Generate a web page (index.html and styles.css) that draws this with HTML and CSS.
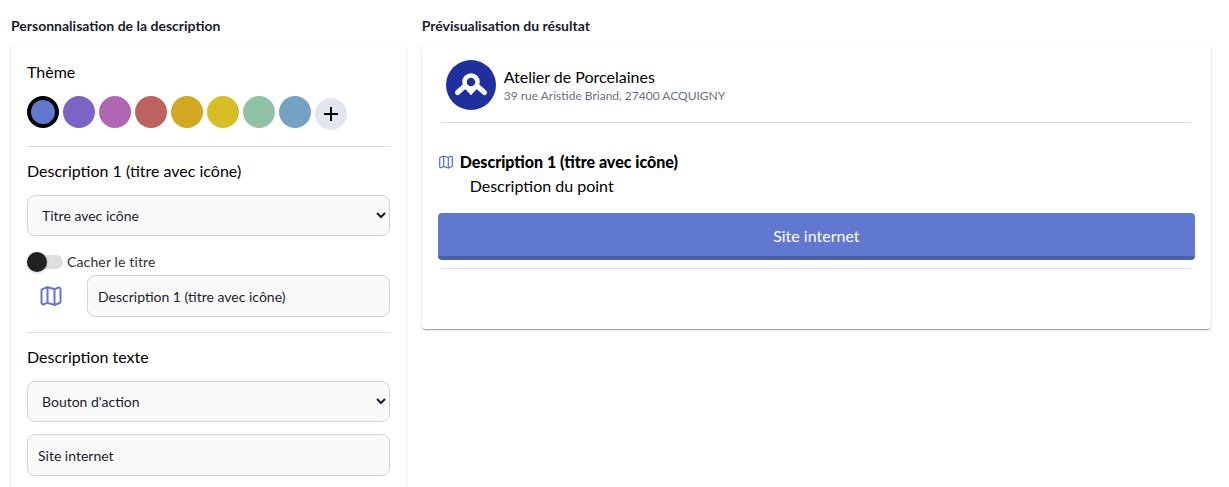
FILE: index.html
```html
<!DOCTYPE html>
<html lang="fr">
<head>
    <meta charset="UTF-8">
    <meta name="viewport" content="width=device-width, initial-scale=1.0">
    <title>Personnalisation de la description</title>
    <link rel="stylesheet" href="styles.css">
</head>
<body>
    <svg width="0" height="0" class="sprite" aria-hidden="true">
        <symbol id="icon-map" viewBox="0 0 24 24">
            <path d="M8.500 3.200v16M15.500 5v16M2.500 6.600v12.200a1.600 1.600 0 0 0 2.200 1.500l3.200-1.300a1.600 1.600 0 0 1 1.100 0l6 1.900a1.600 1.600 0 0 0 1-.1l4.500-1.800a1.600 1.600 0 0 0 1-1.500V5.100a1.600 1.600 0 0 0-2.200-1.500L16 5a1.600 1.600 0 0 1-1.100 0L9 3.300a1.600 1.600 0 0 0-1 0L3.500 5.100a1.600 1.600 0 0 0-1 1.500z"/>
        </symbol>
    </svg>

    <main class="layout">
        <section class="editor">
            <h2 class="heading">Personnalisation de la description</h2>
            <form class="card form">
                <div class="group">
                    <h3 class="label">Thème</h3>
                    <div class="swatches">
                        <button type="button" class="swatch blue selected" aria-label="Bleu"></button>
                        <button type="button" class="swatch violet" aria-label="Violet"></button>
                        <button type="button" class="swatch pink" aria-label="Rose"></button>
                        <button type="button" class="swatch red" aria-label="Rouge"></button>
                        <button type="button" class="swatch ochre" aria-label="Ocre"></button>
                        <button type="button" class="swatch yellow" aria-label="Jaune"></button>
                        <button type="button" class="swatch green" aria-label="Vert"></button>
                        <button type="button" class="swatch sky" aria-label="Ciel"></button>
                        <button type="button" class="swatch add" aria-label="Ajouter une couleur">
                            <svg viewBox="0 0 24 24" width="24" height="24"><path d="M19 13h-6v6h-2v-6H5v-2h6V5h2v6h6z"/></svg>
                        </button>
                    </div>
                </div>

                <div class="group">
                    <label class="label" for="type-1">Description 1 (titre avec icône)</label>
                    <select class="field" id="type-1">
                        <option>Titre avec icône</option>
                        <option>Bouton d'action</option>
                    </select>
                    <label class="toggle">
                        <input type="checkbox" class="switch">
                        Cacher le titre
                    </label>
                    <div class="icon-row">
                        <button type="button" class="icon-button" aria-label="Choisir une icône">
                            <svg class="map"><use href="#icon-map"/></svg>
                        </button>
                        <input type="text" class="field" aria-label="Titre" value="Description 1 (titre avec icône)">
                    </div>
                </div>

                <div class="group">
                    <label class="label" for="type-2">Description texte</label>
                    <select class="field" id="type-2">
                        <option>Bouton d'action</option>
                        <option>Titre avec icône</option>
                    </select>
                    <input type="text" class="field below" aria-label="Texte du bouton" value="Site internet">
                </div>
            </form>
        </section>

        <section class="preview">
            <h2 class="heading">Prévisualisation du résultat</h2>
            <div class="card result">
                <header class="company">
                    <svg class="logo" viewBox="0 0 50 50" aria-hidden="true">
                        <circle cx="25" cy="25" r="25" fill="#1f2f9e"/>
                        <path d="M11.500 32.500l8-7 5.500 6 5.500-6 8 7" fill="none" stroke="#fff" stroke-width="5" stroke-linecap="round"/>
                        <circle cx="25" cy="22" r="6.500" fill="#1f2f9e" stroke="#fff" stroke-width="4.500"/>
                    </svg>
                    <div>
                        <p class="name">Atelier de Porcelaines</p>
                        <p class="address">39 rue Aristide Briand, 27400 ACQUIGNY</p>
                    </div>
                </header>
                <div class="point">
                    <h3 class="point-title"><svg class="map small"><use href="#icon-map"/></svg>Description 1 (titre avec icône)</h3>
                    <p class="point-text">Description du point</p>
                    <button type="button" class="action">Site internet</button>
                </div>
            </div>
        </section>
    </main>
</body>
</html>
```
FILE: styles.css
```css
* {
    box-sizing: border-box;
}

body {
    margin: 0;
    font-family: Lato, sans-serif;
    font-size: 16px;
    line-height: 24px;
    color: #000;
    background-color: #fff;
}

h2, h3, p {
    margin: 0;
    font-size: 16px;
    font-weight: 400;
}

button, input, select {
    font-family: inherit;
    margin: 0;
}

.sprite {
    position: absolute;
}

.layout {
    display: flex;
    gap: 16px;
    height: 100vh;
    padding: 16px 18px 0 11px;
    overflow: hidden;
}

.editor {
    flex: 1;
    min-width: 0;
}

.preview {
    flex: 2;
    min-width: 0;
}

.heading {
    margin-bottom: 8px;
    font-size: 14px;
    line-height: 20px;
    font-weight: 700;
    color: #1a1c2e;
}

.card {
    border-radius: 4px;
    background-color: #fff;
    box-shadow: 0 2px 1px -1px rgba(0, 0, 0, 0.2), 0 1px 1px 0 rgba(0, 0, 0, 0.14), 0 1px 3px 0 rgba(0, 0, 0, 0.12);
}

/* left column */
.form {
    padding: 16px 16px 48px;
}

.group + .group {
    margin-top: 15px;
    padding-top: 12px;
    border-top: 1px solid #dedede;
}

.label {
    display: block;
    margin-bottom: 12px;
}

.swatches {
    display: flex;
    gap: 4px;
    margin-bottom: 16px;
}

.swatch {
    width: 32px;
    height: 32px;
    padding: 0;
    border: none;
    border-radius: 50%;
    cursor: pointer;
}

.selected {
    border: 4px solid #000;
}

.blue { background-color: #6078cf; }
.violet { background-color: #7c63c4; }
.pink { background-color: #b067b3; }
.red { background-color: #bb635f; }
.ochre { background-color: #d0a822; }
.yellow { background-color: #d8be25; }
.green { background-color: #8fc3a5; }
.sky { background-color: #74a2c4; }

.add {
    display: flex;
    align-items: center;
    justify-content: center;
    margin-top: 2px;
    background-color: #e2e6ef;
}

.field {
    display: block;
    width: 100%;
    height: 42px;
    padding: 0 10px;
    border: 1px solid #d1d3da;
    border-radius: 8px;
    font-size: 14px;
    color: #1a1c2e;
    background-color: #fafafa;
}

select.field {
    height: 41px;
    padding: 0 0 0 10px;
}

.below {
    margin-top: 12px;
}

.toggle {
    display: flex;
    align-items: center;
    gap: 4px;
    margin-top: 16px;
    font-size: 14px;
    line-height: 20px;
    letter-spacing: 0.01em;
    color: #333;
}

.switch {
    appearance: none;
    display: flex;
    align-items: center;
    width: 36px;
    height: 14px;
    border-radius: 7px;
    background-color: #dedede;
}

.switch::before {
    content: "";
    width: 20px;
    height: 20px;
    flex: none;
    border-radius: 50%;
    background-color: #212121;
    box-shadow: 0 1px 3px rgba(0, 0, 0, 0.2);
}

.icon-row {
    display: flex;
    align-items: center;
    gap: 12px;
    margin-top: 3px;
}

.icon-button {
    display: flex;
    flex: none;
    align-items: center;
    justify-content: center;
    width: 48px;
    height: 40px;
    padding: 0;
    border: none;
    background: none;
}

.map {
    width: 24px;
    height: 24px;
    fill: none;
    stroke: #6078cf;
    stroke-width: 2;
}

.small {
    width: 16px;
    height: 16px;
}

/* right column */
.result {
    padding: 16px 16px 60px;
}

.company {
    display: flex;
    align-items: center;
    gap: 8px;
    margin: 0 4px 0 3px;
    padding: 0 5px 12px;
    border-bottom: 1px solid #dedede;
}

.logo {
    width: 50px;
    height: 50px;
}

.name {
    padding-top: 2px;
    line-height: 20px;
}

.address {
    font-size: 12px;
    line-height: 18px;
    color: #6b7080;
}

.point {
    padding-top: 27px;
}

.point-title {
    display: flex;
    align-items: center;
    gap: 6px;
    font-weight: 900;
}

.point-text {
    padding-left: 32px;
}

.action {
    display: block;
    width: 100%;
    height: 47px;
    margin-top: 15px;
    padding: 2px 0 0;
    border: none;
    border-bottom: 4px solid #4d60a6;
    border-radius: 4px;
    font-size: 16px;
    color: #fff;
    background-color: #6078cf;
}

.point::after {
    content: "";
    display: block;
    margin: 8px 4px 0 3px;
    border-top: 1px solid #dedede;
}
```
